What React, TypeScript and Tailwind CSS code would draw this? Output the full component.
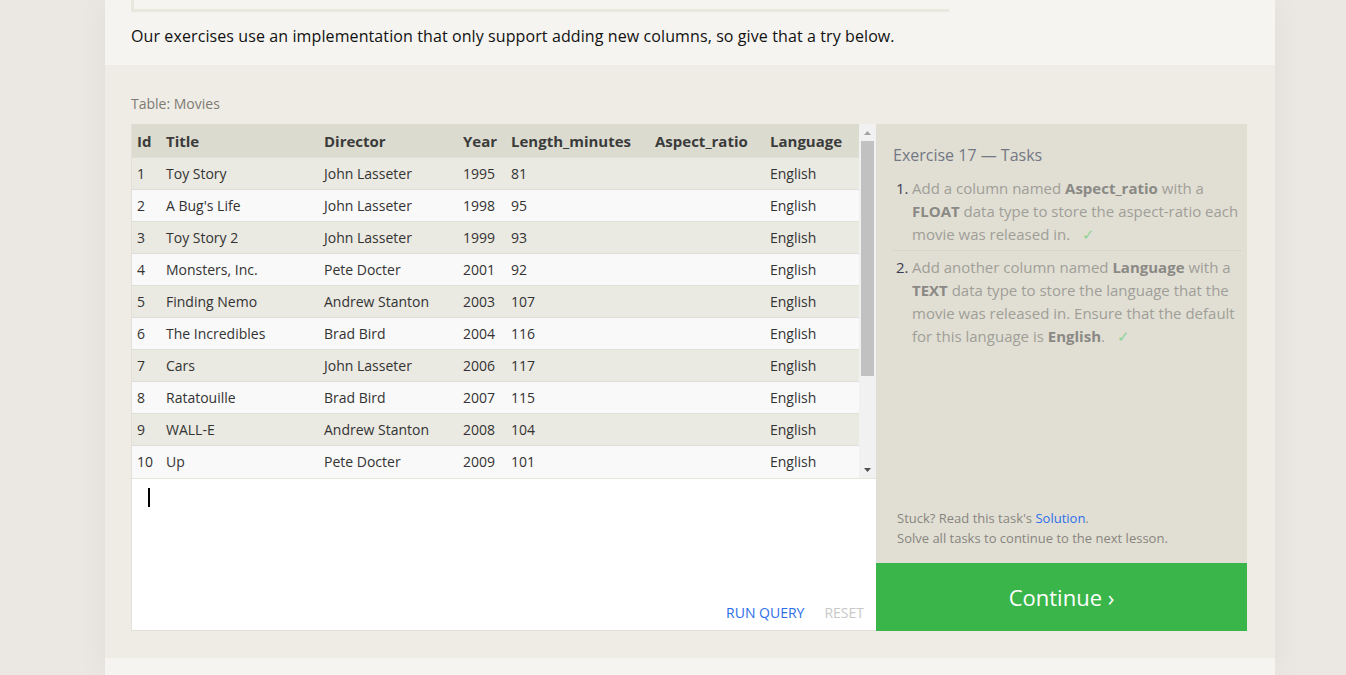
import React from 'react';

const movies = [
  { id: 1, title: 'Toy Story', director: 'John Lasseter', year: 1995, length: 81 },
  { id: 2, title: "A Bug's Life", director: 'John Lasseter', year: 1998, length: 95 },
  { id: 3, title: 'Toy Story 2', director: 'John Lasseter', year: 1999, length: 93 },
  { id: 4, title: 'Monsters, Inc.', director: 'Pete Docter', year: 2001, length: 92 },
  { id: 5, title: 'Finding Nemo', director: 'Andrew Stanton', year: 2003, length: 107 },
  { id: 6, title: 'The Incredibles', director: 'Brad Bird', year: 2004, length: 116 },
  { id: 7, title: 'Cars', director: 'John Lasseter', year: 2006, length: 117 },
  { id: 8, title: 'Ratatouille', director: 'Brad Bird', year: 2007, length: 115 },
  { id: 9, title: 'WALL-E', director: 'Andrew Stanton', year: 2008, length: 104 },
  { id: 10, title: 'Up', director: 'Pete Docter', year: 2009, length: 101 },
];

const columns = ['Id', 'Title', 'Director', 'Year', 'Length_minutes', 'Aspect_ratio', 'Language'];

const App: React.FC = () => {
  return (
    <div className="min-h-[675px] bg-[#ebe7e3] font-['Open_Sans',sans-serif] text-[#333]">
      <div className="ml-[105px] w-[1170px] bg-[#f5f4f0] shadow-[0_0_30px_rgba(0,0,0,0.05)]">
        {/* tail of the previous lesson block */}
        <div className="px-[26px] pb-[18px]">
          <div className="w-[818px] h-[12px] border-l-[3px] border-b-[3px] border-[#e8e8de]"></div>
          <p className="mt-[13px] text-[16px] leading-[22px] tracking-[0.1px] text-[#111]">
            Our exercises use an implementation that only support adding new columns, so give that a try below.
          </p>
        </div>

        {/* Exercise area */}
        <section className="bg-[#efece5] px-[26px] pt-[28px] pb-[27px]">
          <div className="text-[14px] leading-[20px] text-[#7d7a74] mb-[11px] translate-y-[1px]">Table: Movies</div>
          <div className="flex h-[507px]">
            <div className="w-[745px] flex flex-col border-l border-b border-[#e2e0d8]">
              <div className="flex h-[354px] bg-[#f9f9f9]">
                <table className="table-fixed w-[727px] border-collapse text-[14px] text-[#333] self-start">
                  <colgroup>
                    <col className="w-[29px]" />
                    <col className="w-[158px]" />
                    <col className="w-[139px]" />
                    <col className="w-[48px]" />
                    <col className="w-[144px]" />
                    <col className="w-[115px]" />
                    <col className="w-[94px]" />
                  </colgroup>
                  <thead>
                    <tr className="bg-[#dcdbd0] h-[33px]">
                      {columns.map(c => (
                        <th key={c} className="text-left font-bold text-[15px] text-[#3b3b3b] pl-[5px] pt-[2px] whitespace-nowrap">{c}</th>
                      ))}
                    </tr>
                  </thead>
                  <tbody>
                    {movies.map((m, i) => (
                      <tr key={m.id} className={`h-[32px] border-t border-[#dfded8] ${i % 2 === 0 ? 'bg-[#eae9e2]' : 'bg-[#f9f9f9]'}`}>
                        <td className="pl-[5px]">{m.id}</td>
                        <td className="pl-[5px]">{m.title}</td>
                        <td className="pl-[5px]">{m.director}</td>
                        <td className="pl-[5px]">{m.year}</td>
                        <td className="pl-[5px]">{m.length}</td>
                        <td className="pl-[5px]"></td>
                        <td className="pl-[5px]">English</td>
                      </tr>
                    ))}
                  </tbody>
                </table>
                {/* scrollbar */}
                <div className="w-[17px] bg-[#f1f1f1] flex flex-col items-center">
                  <div className="h-[17px] flex items-center justify-center">
                    <svg width="7" height="4" viewBox="0 0 7 4"><path d="M3.5 0L7 4H0z" fill="#a3a3a3" /></svg>
                  </div>
                  <div className="w-[13px] h-[235px] bg-[#c1c1c1]"></div>
                  <div className="flex-1"></div>
                  <div className="h-[17px] flex items-center justify-center">
                    <svg width="7" height="4" viewBox="0 0 7 4"><path d="M0 0h7L3.5 4z" fill="#505050" /></svg>
                  </div>
                </div>
              </div>
              {/* editor */}
              <div className="flex-1 bg-white border-t border-[#e6e4dc] flex flex-col pl-[16px] pr-[12px] pt-[9px] pb-[7px]">
                <div className="w-[2px] h-[19px] bg-black"></div>
                <div className="flex-1"></div>
                <div className="flex justify-end gap-[20px] text-[14px]">
                  <span className="text-[#2d6ee8]">RUN QUERY</span>
                  <span className="text-[#c8c8c8]">RESET</span>
                </div>
              </div>
            </div>

            {/* Tasks panel */}
            <div className="w-[371px] bg-[#e1dfd4] flex flex-col">
              <div className="flex-1 pl-[17px] pr-[5px] pt-[20px]">
                <h3 className="text-[16px] leading-[22px] text-[#737884] mb-[11px]">Exercise 17 — Tasks</h3>
                <ol className="text-[15px] leading-[23px] text-[#a09e98]">
                  <li className="flex pb-[4px] border-b border-[#d8d6cb]">
                    <span className="w-[19px] shrink-0 pl-[3px] text-[#3b3e52]">1.</span>
                    <span className="flex-1">
                      Add a column named <b className="text-[#8a8985]">Aspect_ratio</b> with a <b className="text-[#8a8985]">FLOAT</b> data type to store the aspect-ratio each movie was released in.
                      <span className="text-[#8ed494] ml-[12px]">✓</span>
                    </span>
                  </li>
                  <li className="flex pt-[5px]">
                    <span className="w-[19px] shrink-0 pl-[3px] text-[#3b3e52]">2.</span>
                    <span className="flex-1">
                      Add another column named <b className="text-[#8a8985]">Language</b> with a <b className="text-[#8a8985]">TEXT</b> data type to store the language that the movie was released in. Ensure that the default for this language is <b className="text-[#8a8985]">English</b>.
                      <span className="text-[#8ed494] ml-[12px]">✓</span>
                    </span>
                  </li>
                </ol>
              </div>
              <div className="px-[21px] pb-[15px] text-[13px] leading-[20px] text-[#88857e]">
                <div>Stuck? Read this task's <span className="text-[#2d6ee8]">Solution</span>.</div>
                <div>Solve all tasks to continue to the next lesson.</div>
              </div>
              <div className="h-[68px] bg-[#3ab54a] flex items-center justify-center text-white text-[22px]">
                Continue ›
              </div>
            </div>
          </div>
        </section>
        <div className="h-[17px]"></div>
      </div>
    </div>
  );
};

export default App;
